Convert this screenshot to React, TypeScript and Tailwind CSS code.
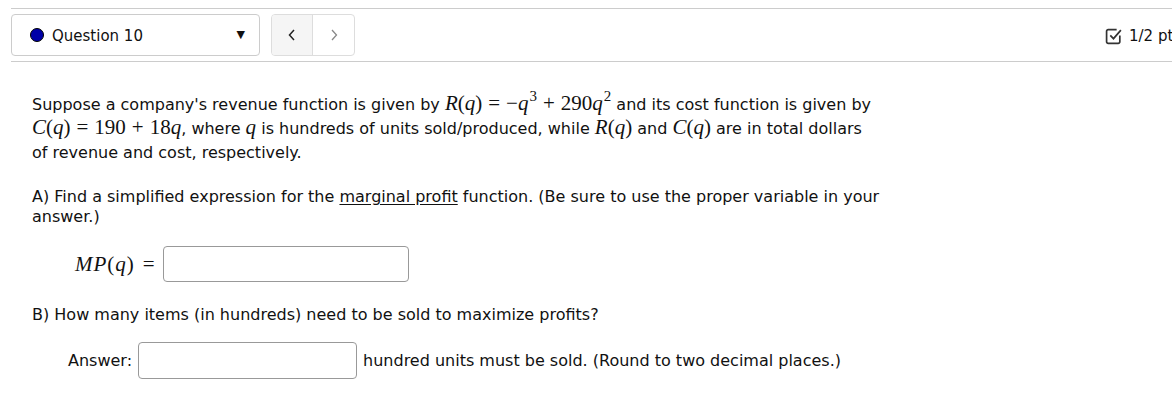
import React from "react";

const M = ({ children }: { children: React.ReactNode }) => (
  <span className="text-[21px] leading-none" style={{ fontFamily: '"Liberation Serif", "DejaVu Serif", serif' }}>
    {children}
  </span>
);
const I = ({ children }: { children: React.ReactNode }) => <i className="italic">{children}</i>;
const Op = ({ children }: { children: React.ReactNode }) => <span className="mx-[6px]">{children}</span>;
const Sup = ({ children }: { children: React.ReactNode }) => (
  <span className="text-[15px] relative top-[-9px] ml-[1px]">{children}</span>
);

export default function App() {
  return (
    <div
      className="w-[1172px] h-[408px] bg-white overflow-hidden text-[16px] text-[#111] relative"
      style={{ fontFamily: '"DejaVu Sans", "Noto Sans", sans-serif' }}
    >
      <div className="ml-[11px] mt-[8px] border-t border-b border-[#cccccc] py-[5px] flex items-center">
        <div className="w-[249px] h-[42px] border border-[#cccccc] rounded-[4px] flex items-center pl-[18px] pr-[14px]">
          <span className="w-[14px] h-[14px] rounded-full bg-[#0000a8] border border-black" />
          <span className="ml-[8px] text-[15px] relative top-[1px]">Question 10</span>
          <span className="ml-auto text-[11px]">▼</span>
        </div>
        <div className="ml-[11px] h-[42px] w-[84px] border border-[#dddddd] rounded-[4px] flex overflow-hidden">
          <div className="w-[41px] bg-[#f5f5f5] border-r border-[#dddddd] flex items-center justify-center">
            <svg width="10" height="14" viewBox="0 0 10 14"><path d="M7 2 L2.5 7 L7 12" fill="none" stroke="#222" strokeWidth="1.5" /></svg>
          </div>
          <div className="flex-1 flex items-center justify-center">
            <svg width="10" height="14" viewBox="0 0 10 14"><path d="M3 2 L7.5 7 L3 12" fill="none" stroke="#888" strokeWidth="1.3" /></svg>
          </div>
        </div>
        <div className="ml-auto flex items-center gap-[6px] whitespace-nowrap w-[67px] overflow-hidden relative top-[1px]">
          <svg width="18" height="18" viewBox="0 0 17 17" className="shrink-0">
            <path d="M14 8 V14 a1.5 1.5 0 0 1 -1.5 1.5 H3 a1.5 1.5 0 0 1 -1.5 -1.5 V4 a1.5 1.5 0 0 1 1.5 -1.5 H11" fill="none" stroke="#333" strokeWidth="1.6" />
            <path d="M5 8 L8 11 L15 3" fill="none" stroke="#333" strokeWidth="1.6" />
          </svg>
          <span className="text-[15px]">1/2 pts</span>
        </div>
      </div>

      <div className="pl-[32px] pt-[31px] w-[904px]">
        <p className="leading-[24px]">
          Suppose a company's revenue function is given by{" "}
          <M>
            <I>R</I>(<I>q</I>)<Op>=</Op>−<I>q</I>
            <Sup>3</Sup>
            <Op>+</Op>290<I>q</I>
            <Sup>2</Sup>
          </M>{" "}
          and its cost function is given by{" "}
          <M>
            <I>C</I>(<I>q</I>)<Op>=</Op>190<Op>+</Op>18<I>q</I>
          </M>
          , where <M><I>q</I></M> is hundreds of units sold/produced, while <M><I>R</I>(<I>q</I>)</M> and{" "}
          <M><I>C</I>(<I>q</I>)</M> are in total dollars
          <br />
          of revenue and cost, respectively.
        </p>

        <p className="leading-[20px] mt-[22px]">
          A) Find a simplified expression for the <span className="underline underline-offset-2">marginal profit</span> function. (Be sure to use the proper variable in your answer.)
        </p>

        <div className="mt-[19px] ml-[43px] flex items-center">
          <M>
            <span className="tracking-[1px]"><I>MP</I>(<I>q</I>)</span>
            <span className="ml-[8px]">=</span>
          </M>
          <div className="ml-[8px] w-[246px] h-[36px] border border-[#999] rounded-[4px]" />
        </div>

        <p className="mt-[23px] leading-[20px]">B) How many items (in hundreds) need to be sold to maximize profits?</p>

        <div className="mt-[17px] ml-[36px] flex items-center">
          <span>Answer:</span>
          <div className="ml-[6px] w-[219px] h-[37px] border border-[#999] rounded-[4px]" />
          <span className="ml-[6px]">hundred units must be sold. (Round to two decimal places.)</span>
        </div>
      </div>
    </div>
  );
}
